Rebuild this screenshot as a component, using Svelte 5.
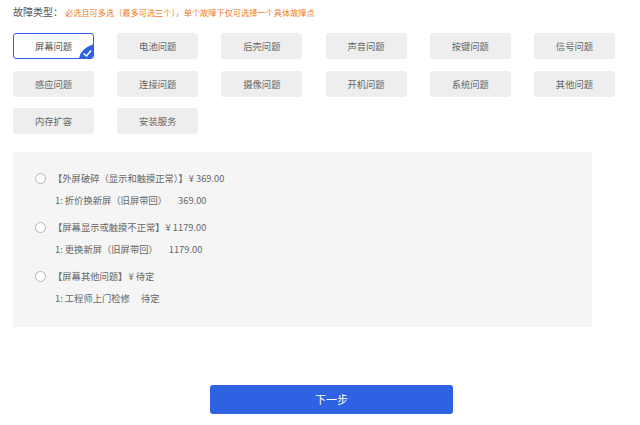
<script>
    const types = [
        "屏幕问题", "电池问题", "后壳问题", "声音问题", "按键问题", "信号问题",
        "感应问题", "连接问题", "摄像问题", "开机问题", "系统问题", "其他问题",
        "内存扩容", "安装服务"
    ];

    const faults = [
        { title: "【外屏破碎（显示和触摸正常）】", price: "¥ 369.00", plan: "1: 折价换新屏（旧屏带回）", cost: "369.00" },
        { title: "【屏幕显示或触摸不正常】", price: "¥ 1179.00", plan: "1: 更换新屏（旧屏带回）", cost: "1179.00" },
        { title: "【屏幕其他问题】", price: "¥ 待定", plan: "1: 工程师上门检修", cost: "待定" }
    ];

    let selected = $state("屏幕问题");
    let picked = $state(-1);
</script>

<div class="page">
    <div class="head">
        <span class="label">故障类型：</span>
        <span class="hint">必选且可多选（最多可选三个），单个故障下仅可选择一个具体故障点</span>
    </div>

    <div class="types">
        {#each types as name}
            <button class="type" class:active={selected === name} onclick={() => (selected = name)}>
                {name}
                {#if selected === name}
                    <span class="tick">
                        <svg viewBox="0 0 16 16" width="16" height="16">
                            <path d="M16 1 V13 Q16 16 13 16 H1 Q2 6 16 1 Z" fill="#2d63e2" />
                            <path d="M5.5 10.5 L8.5 13 L13 7.5" fill="none" stroke="#fff" stroke-width="1.5" />
                        </svg>
                    </span>
                {/if}
            </button>
        {/each}
    </div>

    <div class="panel">
        {#each faults as fault, i}
            <div class="fault">
                <button class="row" onclick={() => (picked = i)}>
                    <span class="radio" class:on={picked === i}></span>
                    <span>{fault.title}</span>
                    <span class="price">{fault.price}</span>
                </button>
                <div class="plan">
                    <span>{fault.plan}</span>
                    <span class="cost">{fault.cost}</span>
                </div>
            </div>
        {/each}
    </div>

    <button class="next">下一步</button>
</div>

<style>
    :global(body) {
        background: #fff;
    }

    .page {
        height: 425px;
        box-sizing: border-box;
        padding: 5px 13px 0;
        font-family: "Noto Sans CJK SC", "Liberation Sans", sans-serif;
        color: #555;
    }

    button {
        font-family: inherit;
        border: none;
        padding: 0;
        cursor: pointer;
    }

    .head {
        display: flex;
        align-items: center;
        height: 13px;
    }

    .label {
        font-size: 10px;
        color: #555;
        width: 52px;
    }

    .hint {
        font-size: 8.2px;
        color: #f07a1c;
    }

    .types {
        display: grid;
        grid-template-columns: repeat(6, 81px);
        grid-auto-rows: 26px;
        column-gap: 23.2px;
        row-gap: 11.7px;
        margin-top: 15px;
    }

    .type {
        position: relative;
        background: #eeeeee;
        border-radius: 3px;
        font-size: 9.3px;
        color: #666;
    }

    .type.active {
        background: #fff;
        border: 1px solid #2d63e2;
        color: #555;
        overflow: hidden;
    }

    .tick {
        position: absolute;
        right: -1px;
        bottom: -1px;
        display: flex;
    }

    .panel {
        width: 579px;
        height: 175px;
        box-sizing: border-box;
        margin-top: 18px;
        padding: 17px 0 0 22px;
        background: #f5f5f5;
    }

    .fault {
        height: 49px;
    }

    .row {
        display: flex;
        align-items: center;
        height: 17px;
        background: none;
        font-size: 9.3px;
        color: #666;
    }

    .radio {
        width: 9px;
        height: 9px;
        margin-top: 2px;
        border: 1px solid #b5b5b5;
        border-radius: 50%;
        background: #fff;
        margin-right: 7px;
    }

    .radio.on {
        border: 3px solid #2d63e2;
        width: 5px;
        height: 5px;
    }

    .price {
        margin-left: 1px;
    }

    .plan {
        display: flex;
        align-items: center;
        height: 17px;
        margin: 5px 0 0 20px;
        font-size: 9.3px;
        color: #666;
    }

    .cost {
        margin-left: 11px;
    }

    .next {
        display: block;
        width: 243px;
        height: 29px;
        margin: 58px 0 0 197px;
        padding-bottom: 2px;
        background: #2d63e2;
        border-radius: 3px;
        color: #fff;
        font-size: 11px;
    }
</style>
